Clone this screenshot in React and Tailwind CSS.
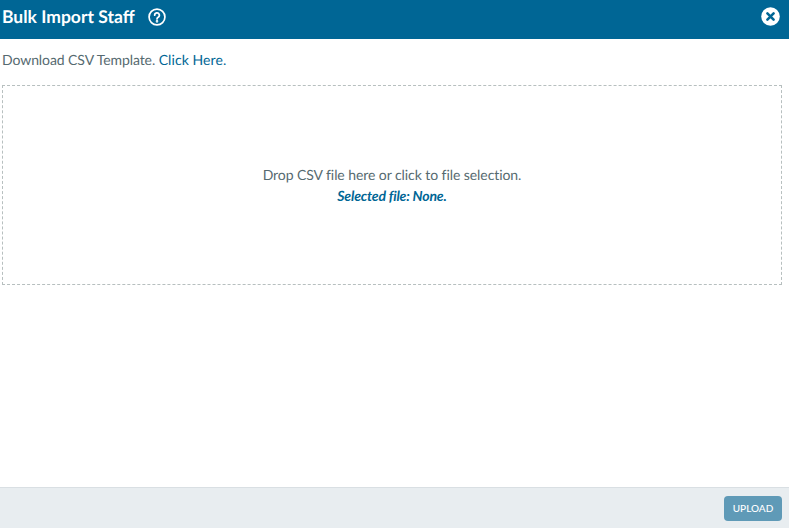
import React from "react";

export default function App() {
  return (
    <div className="flex h-[528px] w-[789px] flex-col overflow-hidden bg-white font-['Lato',sans-serif] text-[#566a70] [text-rendering:geometricPrecision]">
      <header className="flex h-[39px] shrink-0 items-center justify-between bg-[#006695] pb-[6px] pl-[2px] pr-[9px] text-white">
        <div className="flex items-center gap-[13px]">
          <h1 className="text-[17.5px] font-bold leading-none">Bulk Import Staff</h1>
          <svg width="18" height="18" viewBox="0 0 20 20" fill="none" stroke="white" strokeWidth="1.9" strokeLinecap="round">
            <circle cx="10" cy="10" r="8.8" />
            <path d="M7.4 8a2.6 2.6 0 1 1 3.9 2.2c-.9.5-1.3 1-1.3 1.9" />
            <circle cx="10" cy="14.8" r=".5" fill="white" />
          </svg>
        </div>
        <svg width="19" height="19" viewBox="0 0 19 19">
          <circle cx="9.5" cy="9.5" r="9.3" fill="white" />
          <path d="M6.4 6.4l6.2 6.2M12.6 6.4l-6.2 6.2" stroke="#006695" strokeWidth="2.6" strokeLinecap="round" />
        </svg>
      </header>
      <main className="flex-1 pl-[2px] pr-[7px] pt-[12px]">
        <p className="text-[14px] leading-[18px]">
          <span className="tracking-[-0.08px]">Download CSV Template. </span>
          <a className="text-[#006695] tracking-[0.08px]">Click Here.</a>
        </p>
        <div className="mt-[16px] flex h-[200px] flex-col items-center justify-center border border-dashed border-[#b7bfbf] text-[14px]">
          <p className="leading-[21px] tracking-[-0.07px]">Drop CSV file here or click to file selection.</p>
          <p className="leading-[21px] font-bold italic tracking-[-0.17px] text-[#006695]">Selected file: None.</p>
        </div>
      </main>
      <footer className="flex h-[41px] shrink-0 items-center justify-end border-t border-[#d9dfe3] bg-[#e8edf0] pr-[7px]">
        <button className="h-[25px] w-[58px] rounded-[4px] bg-[#5f9ab7] text-[10px] font-medium text-white">UPLOAD</button>
      </footer>
    </div>
  );
}
